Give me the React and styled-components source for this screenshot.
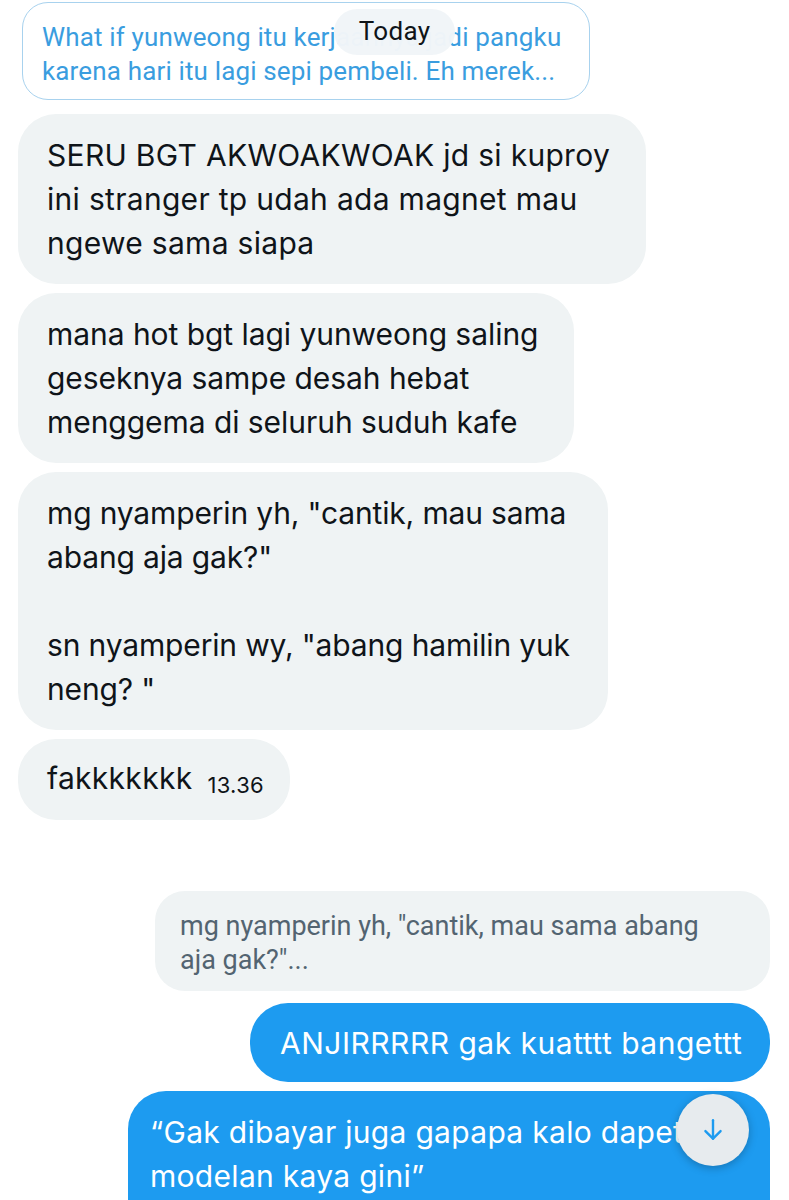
import React from "react";
import styled, { createGlobalStyle } from "styled-components";

const Global = createGlobalStyle`
  html, body { margin: 0; padding: 0; background: #ffffff; }
  body { font-family: Inter, "Noto Sans", sans-serif; -webkit-font-smoothing: antialiased; }
  * { box-sizing: border-box; }
`;

const Page = styled.div`
  position: relative;
  width: 789px;
  height: 1200px;
  overflow: hidden;
  display: flex;
  flex-direction: column;
  padding: 2px 19px 0 18px;
  & > * { flex-shrink: 0; }
`;

const QuoteTop = styled.div`
  position: relative;
  align-self: flex-start;
  margin-left: 4px;
  width: 568px;
  height: 98px;
  border: 1.5px solid #a8d2ee;
  border-radius: 26px;
  padding: 17px 0 0 19px;
  color: #3a9ddf;
  font-family: Roboto, "Noto Sans", sans-serif;
  font-size: 26px;
  line-height: 34px;
  letter-spacing: 0.15px;
  white-space: nowrap;
`;

const DatePill = styled.div`
  position: absolute;
  left: 311px;
  top: 6px;
  width: 121px;
  height: 46px;
  border-radius: 23px;
  background: rgba(241, 245, 248, 0.98);
  color: #0f1419;
  font-family: Roboto, "Noto Sans", sans-serif;
  font-size: 26px;
  letter-spacing: 0.3px;
  display: flex;
  align-items: center;
  justify-content: center;
  padding-bottom: 2px;
`;

const Group = styled.div`
  display: flex;
  flex-direction: column;
  align-items: ${(p) => (p.$mine ? "flex-end" : "flex-start")};
  gap: ${(p) => p.$gap}px;
  margin-top: ${(p) => p.$top}px;
  & > * { flex-shrink: 0; }
`;

const Bubble = styled.div`
  width: ${(p) => p.$w}px;
  background: ${(p) => (p.$mine ? "#1d9bf0" : "#eff3f4")};
  color: ${(p) => (p.$mine ? "#ffffff" : "#0f1419")};
  border-radius: 38px;
  padding: ${(p) => p.$pad || "19px 20px 19px 29px"};
  font-size: 30px;
  line-height: 44px;
  letter-spacing: ${(p) => (p.$ls === undefined ? 0.3 : p.$ls)}px;
  white-space: nowrap;
`;

const Time = styled.span`
  font-size: 22px;
  margin-left: 15px;
  position: relative;
  top: 4px;
  letter-spacing: 0.3px;
`;

const ReplyQuote = styled.div`
  width: 615px;
  height: 100px;
  background: #eff3f4;
  border-radius: 30px;
  padding: 18px 0 0 25px;
  color: #536471;
  font-family: Roboto, "Noto Sans", sans-serif;
  font-size: 27px;
  line-height: 34px;
  letter-spacing: 0;
  white-space: nowrap;
`;

const Gap = styled.div`
  height: ${(p) => p.$h}px;
`;

const LastWrap = styled.div`
  position: relative;
`;

const DownButton = styled.div`
  position: absolute;
  right: 21px;
  top: 3px;
  width: 72px;
  height: 72px;
  border-radius: 50%;
  background: #e7ebee;
  box-shadow: 0 2px 8px rgba(0, 0, 0, 0.25);
  display: flex;
  align-items: center;
  justify-content: center;
`;

const Lines = ({ children }) =>
  children.map((l, i) => (
    <React.Fragment key={i}>
      {i > 0 && <br />}
      {l}
    </React.Fragment>
  ));

export default function App() {
  return (
    <>
      <Global />
      <Page>
        <QuoteTop>
          <Lines>
            {["What if yunweong itu kerjaannya jadi pangku", "karena hari itu lagi sepi pembeli. Eh merek..."]}
          </Lines>
          <DatePill>Today</DatePill>
        </QuoteTop>

        <Group $top={14} $gap={9}>
          <Bubble $w={628}>
            <Lines>
              {["SERU BGT AKWOAKWOAK jd si kuproy", "ini stranger tp udah ada magnet mau", "ngewe sama siapa"]}
            </Lines>
          </Bubble>
          <Bubble $w={556} $ls={-0.05}>
            <Lines>
              {["mana hot bgt lagi yunweong saling", "geseknya sampe desah hebat", "menggema di seluruh suduh kafe"]}
            </Lines>
          </Bubble>
          <Bubble $w={590} $ls={-0.15}>
            <Lines>
              {[
                'mg nyamperin yh, "cantik, mau sama',
                'abang aja gak?"',
                "\u00a0",
                'sn nyamperin wy, "abang hamilin yuk',
                'neng? "',
              ]}
            </Lines>
          </Bubble>
          <Bubble $w={272} $pad="17px 20px 17px 29px">
            fakkkkkkk<Time>13.36</Time>
          </Bubble>
        </Group>

        <Group $mine $top={71} $gap={0}>
          <ReplyQuote>
            <Lines>{['mg nyamperin yh, "cantik, mau sama abang', 'aja gak?"...']}</Lines>
          </ReplyQuote>
          <Gap $h={12} />
          <Bubble $mine $w={520} $pad="18px 20px 17px 30px" $ls={0.5}>
            ANJIRRRRR gak kuatttt bangettt
          </Bubble>
          <Gap $h={9} />
          <LastWrap>
            <Bubble $mine $w={642} $pad="19px 20px 40px 22px" $ls={0.3}>
              <Lines>{["\u201cGak dibayar juga gapapa kalo dapet", "modelan kaya gini\u201d"]}</Lines>
            </Bubble>
            <DownButton>
              <svg width="26" height="26" viewBox="0 0 24 24" fill="none" stroke="#1d9bf0" strokeWidth="2.2" strokeLinecap="round" strokeLinejoin="round">
                <path d="M12 3v17" />
                <path d="M5 13l7 7 7-7" />
              </svg>
            </DownButton>
          </LastWrap>
        </Group>
      </Page>
    </>
  );
}
